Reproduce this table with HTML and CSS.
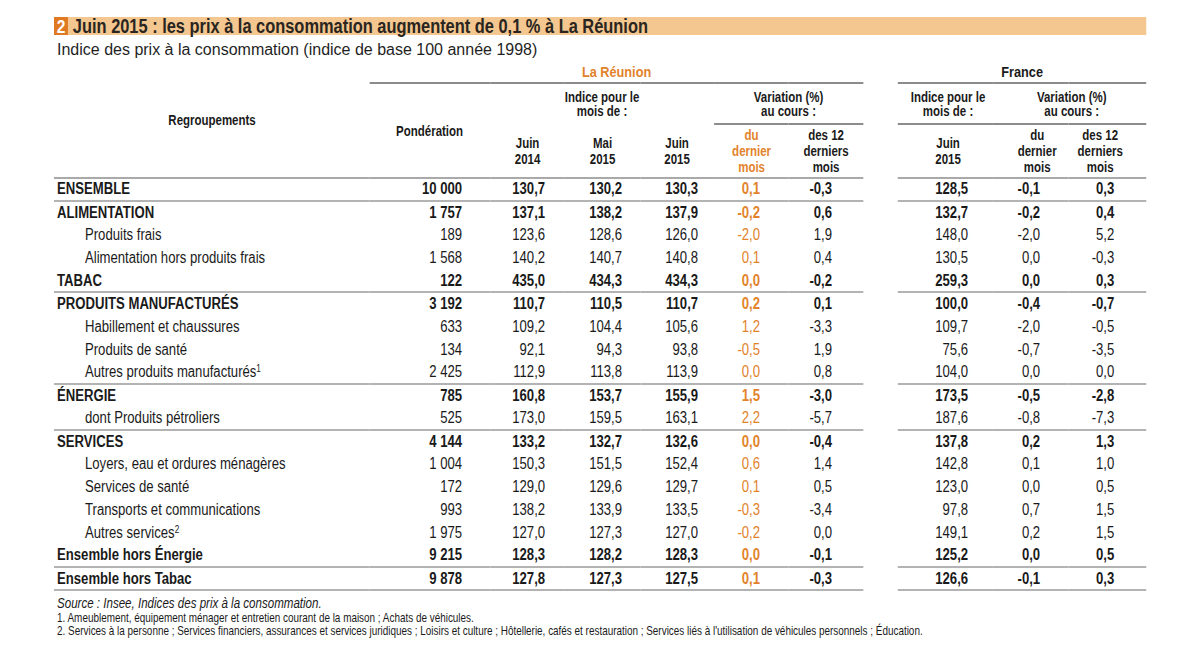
FILE: index.html
```html
<!DOCTYPE html>
<html lang="fr">
<head>
<meta charset="utf-8">
<title>Indice des prix à la consommation</title>
<link rel="stylesheet" href="styles.css">
</head>
<body>
<div class="page">
  <div class="title narrow"><span class="num">2</span><span class="title-text">Juin 2015 : les prix à la consommation augmentent de 0,1 % à La Réunion</span></div>
  <div class="subtitle">Indice des prix à la consommation (indice de base 100 année 1998)</div>
  <table class="tbl narrow">
    <colgroup>
      <col class="w-label"><col class="w-pond"><col class="w-75"><col class="w-75"><col class="w-74"><col class="w-75"><col class="w-74"><col class="w-gap"><col class="w-95"><col class="w-75"><col class="w-78">
    </colgroup>
    <thead>
      <tr class="ha">
        <th rowspan="3" class="regroup line">Regroupements</th>
        <th colspan="6" class="zone line-dark">La Réunion</th>
        <th rowspan="3" class="gap"></th>
        <th colspan="3" class="zone fr line-dark">France</th>
      </tr>
      <tr class="hb">
        <th rowspan="2" class="pond line">Pondération</th>
        <th colspan="3" class="grp">Indice pour le<br>mois de :</th>
        <th colspan="2" class="grp line-dark">Variation (%)<br>au cours :</th>
        <th class="grp fr-i line-dark">Indice pour le<br>mois de :</th>
        <th colspan="2" class="grp fr-v line-dark">Variation (%)<br>au cours :</th>
      </tr>
      <tr class="hc">
        <th class="line">Juin<br>2014</th>
        <th class="line">Mai<br>2015</th>
        <th class="line">Juin<br>2015</th>
        <th class="line orange">du<br>dernier<br>mois</th>
        <th class="line">des 12<br>derniers<br>mois</th>
        <th class="line f8">Juin<br>2015</th>
        <th class="line f9">du<br>dernier<br>mois</th>
        <th class="line f10">des 12<br>derniers<br>mois</th>
      </tr>
    </thead>
    <tbody>
      <tr class="b sep"><td class="lbl">ENSEMBLE</td><td class="c2">10 000</td><td class="c3">130,7</td><td class="c4">130,2</td><td class="c5">130,3</td><td class="c6">0,1</td><td class="c7">-0,3</td><td class="gap"></td><td class="c8">128,5</td><td class="c9">-0,1</td><td class="c10">0,3</td></tr>
      <tr class="b"><td class="lbl">ALIMENTATION</td><td class="c2">1 757</td><td class="c3">137,1</td><td class="c4">138,2</td><td class="c5">137,9</td><td class="c6">-0,2</td><td class="c7">0,6</td><td class="gap"></td><td class="c8">132,7</td><td class="c9">-0,2</td><td class="c10">0,4</td></tr>
      <tr><td class="lbl sub">Produits frais</td><td class="c2">189</td><td class="c3">123,6</td><td class="c4">128,6</td><td class="c5">126,0</td><td class="c6">-2,0</td><td class="c7">1,9</td><td class="gap"></td><td class="c8">148,0</td><td class="c9">-2,0</td><td class="c10">5,2</td></tr>
      <tr><td class="lbl sub">Alimentation hors produits frais</td><td class="c2">1 568</td><td class="c3">140,2</td><td class="c4">140,7</td><td class="c5">140,8</td><td class="c6">0,1</td><td class="c7">0,4</td><td class="gap"></td><td class="c8">130,5</td><td class="c9">0,0</td><td class="c10">-0,3</td></tr>
      <tr class="b sep"><td class="lbl">TABAC</td><td class="c2">122</td><td class="c3">435,0</td><td class="c4">434,3</td><td class="c5">434,3</td><td class="c6">0,0</td><td class="c7">-0,2</td><td class="gap"></td><td class="c8">259,3</td><td class="c9">0,0</td><td class="c10">0,3</td></tr>
      <tr class="b"><td class="lbl">PRODUITS MANUFACTURÉS</td><td class="c2">3 192</td><td class="c3">110,7</td><td class="c4">110,5</td><td class="c5">110,7</td><td class="c6">0,2</td><td class="c7">0,1</td><td class="gap"></td><td class="c8">100,0</td><td class="c9">-0,4</td><td class="c10">-0,7</td></tr>
      <tr><td class="lbl sub">Habillement et chaussures</td><td class="c2">633</td><td class="c3">109,2</td><td class="c4">104,4</td><td class="c5">105,6</td><td class="c6">1,2</td><td class="c7">-3,3</td><td class="gap"></td><td class="c8">109,7</td><td class="c9">-2,0</td><td class="c10">-0,5</td></tr>
      <tr><td class="lbl sub">Produits de santé</td><td class="c2">134</td><td class="c3">92,1</td><td class="c4">94,3</td><td class="c5">93,8</td><td class="c6">-0,5</td><td class="c7">1,9</td><td class="gap"></td><td class="c8">75,6</td><td class="c9">-0,7</td><td class="c10">-3,5</td></tr>
      <tr class="sep"><td class="lbl sub">Autres produits manufacturés<sup>1</sup></td><td class="c2">2 425</td><td class="c3">112,9</td><td class="c4">113,8</td><td class="c5">113,9</td><td class="c6">0,0</td><td class="c7">0,8</td><td class="gap"></td><td class="c8">104,0</td><td class="c9">0,0</td><td class="c10">0,0</td></tr>
      <tr class="b"><td class="lbl">ÉNERGIE</td><td class="c2">785</td><td class="c3">160,8</td><td class="c4">153,7</td><td class="c5">155,9</td><td class="c6">1,5</td><td class="c7">-3,0</td><td class="gap"></td><td class="c8">173,5</td><td class="c9">-0,5</td><td class="c10">-2,8</td></tr>
      <tr class="sep"><td class="lbl sub">dont Produits pétroliers</td><td class="c2">525</td><td class="c3">173,0</td><td class="c4">159,5</td><td class="c5">163,1</td><td class="c6">2,2</td><td class="c7">-5,7</td><td class="gap"></td><td class="c8">187,6</td><td class="c9">-0,8</td><td class="c10">-7,3</td></tr>
      <tr class="b"><td class="lbl">SERVICES</td><td class="c2">4 144</td><td class="c3">133,2</td><td class="c4">132,7</td><td class="c5">132,6</td><td class="c6">0,0</td><td class="c7">-0,4</td><td class="gap"></td><td class="c8">137,8</td><td class="c9">0,2</td><td class="c10">1,3</td></tr>
      <tr><td class="lbl sub">Loyers, eau et ordures ménagères</td><td class="c2">1 004</td><td class="c3">150,3</td><td class="c4">151,5</td><td class="c5">152,4</td><td class="c6">0,6</td><td class="c7">1,4</td><td class="gap"></td><td class="c8">142,8</td><td class="c9">0,1</td><td class="c10">1,0</td></tr>
      <tr><td class="lbl sub">Services de santé</td><td class="c2">172</td><td class="c3">129,0</td><td class="c4">129,6</td><td class="c5">129,7</td><td class="c6">0,1</td><td class="c7">0,5</td><td class="gap"></td><td class="c8">123,0</td><td class="c9">0,0</td><td class="c10">0,5</td></tr>
      <tr><td class="lbl sub">Transports et communications</td><td class="c2">993</td><td class="c3">138,2</td><td class="c4">133,9</td><td class="c5">133,5</td><td class="c6">-0,3</td><td class="c7">-3,4</td><td class="gap"></td><td class="c8">97,8</td><td class="c9">0,7</td><td class="c10">1,5</td></tr>
      <tr><td class="lbl sub">Autres services<sup>2</sup></td><td class="c2">1 975</td><td class="c3">127,0</td><td class="c4">127,3</td><td class="c5">127,0</td><td class="c6">-0,2</td><td class="c7">0,0</td><td class="gap"></td><td class="c8">149,1</td><td class="c9">0,2</td><td class="c10">1,5</td></tr>
      <tr class="b sep"><td class="lbl">Ensemble hors Énergie</td><td class="c2">9 215</td><td class="c3">128,3</td><td class="c4">128,2</td><td class="c5">128,3</td><td class="c6">0,0</td><td class="c7">-0,1</td><td class="gap"></td><td class="c8">125,2</td><td class="c9">0,0</td><td class="c10">0,5</td></tr>
      <tr class="b sep"><td class="lbl">Ensemble hors Tabac</td><td class="c2">9 878</td><td class="c3">127,8</td><td class="c4">127,3</td><td class="c5">127,5</td><td class="c6">0,1</td><td class="c7">-0,3</td><td class="gap"></td><td class="c8">126,6</td><td class="c9">-0,1</td><td class="c10">0,3</td></tr>
    </tbody>
  </table>
  <div class="notes narrow">
    <p class="source">Source : Insee, Indices des prix à la consommation.</p>
    <p class="note">1. Ameublement, équipement ménager et entretien courant de la maison ; Achats de véhicules.</p>
    <p class="note">2. Services à la personne ; Services financiers, assurances et services juridiques ; Loisirs et culture ; Hôtellerie, cafés et restauration ; Services liés à l'utilisation de véhicules personnels ; Éducation.</p>
  </div>
</div>
</body>
</html>
```
FILE: styles.css
```css
* { box-sizing: border-box; }
html, body { overflow: hidden; }
body {
  margin: 0;
  background: #ffffff;
  color: #1a1a1a;
  font-family: "Liberation Sans", Arial, sans-serif;
}
.page {
  width: 1200px;
  padding: 17px 54px 0 54px;
}
/* Liberation Sans compressed horizontally to imitate a condensed face */
.narrow {
  transform: scaleX(0.82);
  transform-origin: 0 0;
}
.title {
  display: flex;
  width: 1332px;
  height: 18px;
  background: #f3c78f;
  align-items: center;
}
.num {
  width: 17px;
  height: 18px;
  background: #e07a22;
  color: #ffffff;
  font-weight: bold;
  font-size: 19px;
  line-height: 19px;
  text-align: center;
}
.title-text {
  padding-left: 6px;
  font-weight: bold;
  font-size: 20px;
  line-height: 18px;
  color: #2a2520;
}
.subtitle {
  font-size: 16px;
  line-height: 18px;
  margin-top: 6px;
  padding-left: 3px;
  color: #1f1f1f;
}
.tbl {
  margin-top: 1px;
  width: 1332px;
  table-layout: fixed;
  border-collapse: collapse;
}
.w-label { width: 385.4px; }
.w-pond { width: 146.3px; }
.w-75 { width: 91.5px; }
.w-74 { width: 90.2px; }
.w-gap { width: 42.7px; }
.w-95 { width: 115.9px; }
.w-78 { width: 95.1px; }

.tbl th {
  font-size: 14px;
  font-weight: bold;
  padding: 0;
  text-align: center;
}
.tbl th.gap, .tbl td.gap { border: none; }
.line { border-bottom: 2px solid #a9a9a9; }
.line-dark { border-bottom: 2px solid #8c8c8c; }
.ha { height: 23px; }
.ha .zone {
  vertical-align: bottom;
  padding-bottom: 2px;
  font-size: 15.5px;
  color: #e2832b;
  line-height: 17px;
}
.ha .zone.fr { color: #1a1a1a; }
.regroup {
  vertical-align: top;
  padding-top: 52px !important;
  line-height: 16px;
}
.pond {
  text-align: right !important;
  padding-right: 32.9px !important;
  vertical-align: top;
  padding-top: 39px !important;
  line-height: 16px;
}
.hb { height: 41px; }
.hb .grp { line-height: 14px; vertical-align: middle; }
.hb .fr-i { padding-left: 6px; }
.hb .fr-v { padding-left: 5px; }
.hc { height: 54px; }
.hc th { line-height: 16px; vertical-align: middle; }
.hc .f8 { padding-left: 6px; }
.hc .f9 { padding-left: 16px; }
.hc .f10 { padding-right: 17px; }
.orange { color: #e2832b; }

.tbl td {
  font-size: 16px;
  line-height: 18px;
  height: 22.9px;
  padding: 0;
  text-align: right;
  vertical-align: middle;
  white-space: nowrap;
}
.tbl tr.b td { font-weight: bold; }
.tbl tr.sep td { border-bottom: 2px solid #b3b3b3; }
.tbl tr.sep td.gap { border-bottom: none; }
.tbl td.lbl { text-align: left; padding-left: 3.7px; }
.tbl td.sub { padding-left: 37.8px; }
.tbl sup { font-size: 10px; line-height: 0; vertical-align: 5px; }
.c2 { padding-right: 34.1px !important; }
.c3 { padding-right: 24.4px !important; }
.c4 { padding-right: 22px !important; }
.c5 { padding-right: 19.5px !important; }
.c6 { padding-right: 35.4px !important; color: #e2832b; }
.c7 { padding-right: 37.8px !important; }
.c8 { padding-right: 30.5px !important; }
.c9 { padding-right: 34.1px !important; }
.c10 { padding-right: 39px !important; }

.notes { width: 1332px; padding-left: 3.7px; padding-top: 4px; }
.notes p { margin: 0; white-space: nowrap; }
.source {
  font-style: italic;
  font-size: 14.1px;
  line-height: 16px;
  margin-bottom: 1px !important;
}
.note {
  font-size: 12.1px;
  line-height: 13px;
}
```
